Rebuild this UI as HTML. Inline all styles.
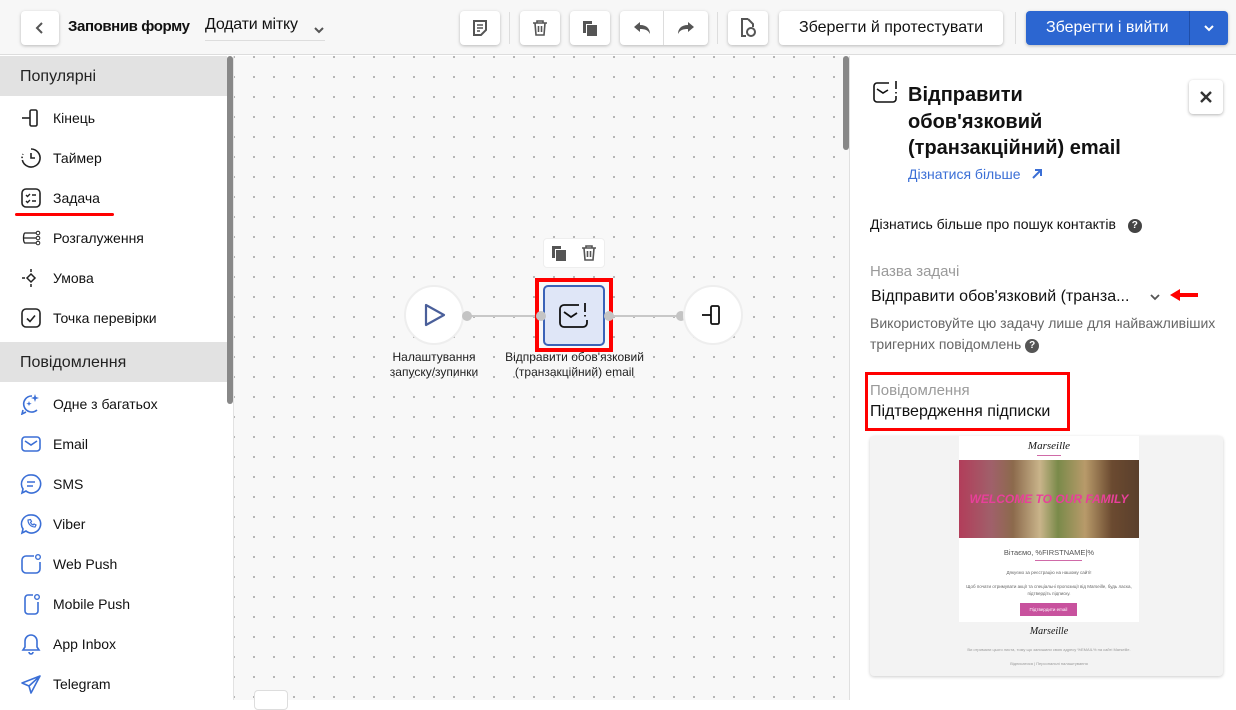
<!DOCTYPE html>
<html><head><meta charset="utf-8"><style>
*{box-sizing:border-box;margin:0;padding:0}
body{width:1236px;height:700px;overflow:hidden;font-family:"Liberation Sans","Noto Sans CJK SC",sans-serif;color:#111;background:#fff;position:relative;font-size:14px}
.abs{position:absolute}
.top{left:0;top:0;width:1236px;height:55px;background:#f7f7f7;border-bottom:1px solid #ddd}
.btn{position:absolute;top:11px;height:34px;background:#fff;border-radius:4px;box-shadow:0 1px 3px rgba(0,0,0,.25);display:flex;align-items:center;justify-content:center}
.sep{position:absolute;top:12px;width:1px;height:32px;background:#ddd}
.side{left:0;top:56px;width:234px;height:644px;background:#fff;border-right:1px solid #e2e2e2}
.hdr{position:absolute;left:0;width:227px;height:40px;background:#e2e2e2;font-size:16px;padding:12px 20px 0;color:#222}
.item{position:absolute;left:20px;height:24px;display:flex;align-items:center;font-size:14px;color:#111}
.item svg{width:22px;height:22px;margin-right:11px}
.canvas{left:234px;top:56px;width:615px;height:644px;background-color:#f8f8f8;background-image:radial-gradient(circle,#aaa 0.8px,transparent 1.2px);background-size:20px 20px;background-position:-10px -9px}
.panel{left:849px;top:56px;width:387px;height:644px;background:#fff;border-left:1px solid #e0e0e0}
.circ{position:absolute;width:60px;height:60px;border-radius:50%;background:#fff;border:2px solid #eee;display:flex;align-items:center;justify-content:center}
.dot{position:absolute;width:10px;height:10px;border-radius:50%;background:#c4c4c4}
.lbl{position:absolute;font-size:12px;text-align:center;color:#222;line-height:15px}
</style></head><body>
<div class="abs top">
 <div class="btn" style="left:21px;width:38px"><svg width="10" height="12"><path d="M7 1 2 6 7 11" stroke="#555" stroke-width="2" fill="none"/></svg></div>
 <div class="abs" style="left:68px;top:18px;font-weight:bold;font-size:15px;letter-spacing:-0.4px">Заповнив форму</div>
 <div class="abs" style="left:205px;top:16px;font-size:16px;border-bottom:1px solid #ddd;width:120px;height:25px;letter-spacing:-0.2px">Додати мітку</div>
 <div class="abs" style="left:313px;top:22px"><svg width="12" height="9"><path d="M2 2l4 4 4-4" stroke="#555" stroke-width="2" fill="none"/></svg></div>
 <div class="btn" style="left:460px;width:40px"><svg width="16" height="18"><path d="M2 2h12v9l-5 5H2z" stroke="#555" stroke-width="2" fill="none"/><path d="M5 6h6M5 9h6M5 12h3" stroke="#555" stroke-width="1.5"/></svg></div>
 <div class="sep" style="left:509px"></div>
 <div class="btn" style="left:520px;width:40px"><svg width="16" height="18"><path d="M1 4h14M5 4V2h6v2M3 4l1 12h8l1-12M6.5 7v6M9.5 7v6" stroke="#555" stroke-width="1.6" fill="none"/></svg></div>
 <div class="btn" style="left:570px;width:40px"><svg width="16" height="16"><path d="M1 1h9v3H4v9H1z" fill="#555"/><rect x="5" y="5" width="10" height="11" fill="#555"/></svg></div>
 <div class="btn" style="left:620px;width:88px;justify-content:space-around"><svg width="18" height="14"><path d="M7 1 1 6l6 5V8c5 0 8 1 10 5 0-5-3-9-10-9z" fill="#555"/></svg><span style="position:absolute;left:43px;top:0;width:1px;height:34px;background:#ddd"></span><svg width="18" height="14"><path d="M11 1l6 5-6 5V8C6 8 3 9 1 13c0-5 3-9 10-9z" fill="#555"/></svg></div>
 <div class="sep" style="left:717px"></div>
 <div class="btn" style="left:728px;width:40px"><svg width="18" height="20"><path d="M9 1H3v17h4M9 1l5 5v3" stroke="#555" stroke-width="2" fill="none"/><circle cx="12" cy="14" r="4" stroke="#555" stroke-width="2" fill="none"/></svg></div>
 <div class="btn" style="left:779px;width:224px;font-size:16px">Зберегти й протестувати</div>
 <div class="sep" style="left:1015px"></div>
 <div class="btn" style="left:1026px;width:202px;background:#2c66d1;color:#fff;font-size:16px;justify-content:flex-start"><span style="margin-left:20px">Зберегти і вийти</span><span style="position:absolute;left:163px;top:0;width:1px;height:34px;background:#1f4ea8"></span><svg style="position:absolute;left:177px;top:13px" width="12" height="9"><path d="M2 2l4 4 4-4" stroke="#fff" stroke-width="2" fill="none"/></svg></div>
</div>

<div class="abs side">
 <div class="hdr" style="top:0">Популярні</div>
 <div class="item" style="top:50px"><svg viewBox="0 0 22 22"><path d="M2 11h8" stroke="#222" stroke-width="1.6"/><rect x="10" y="3" width="7" height="16" rx="1.5" stroke="#222" stroke-width="1.6" fill="none"/></svg>Кінець</div>
 <div class="item" style="top:90px"><svg viewBox="0 0 22 22"><path d="M11 2a9 9 0 1 1-8 5" stroke="#222" stroke-width="1.6" fill="none" stroke-dasharray="40 2 1.5 2 1.5 2"/><path d="M11 6v5h4" stroke="#222" stroke-width="1.6" fill="none"/></svg>Таймер</div>
 <div class="item" style="top:130px"><svg viewBox="0 0 22 22"><rect x="2" y="2" width="18" height="18" rx="4" stroke="#222" stroke-width="1.6" fill="none"/><path d="M6 8l1.5 1.5L10 7M6 14l1.5 1.5L10 13M12 8h4M12 14h4" stroke="#222" stroke-width="1.4" fill="none"/></svg>Задача</div>
 <div class="abs" style="left:15px;top:157px;width:99px;height:3px;background:#f00;border-radius:2px"></div>
 <div class="item" style="top:170px"><svg viewBox="0 0 22 22"><path d="M3 11h13M5 6h11M5 16h11M5 6c-2 0-2 10 0 10" stroke="#222" stroke-width="1.3" fill="none"/><circle cx="18" cy="6" r="1.8" stroke="#222" fill="none"/><circle cx="18" cy="11" r="1.8" stroke="#222" fill="none"/><circle cx="18" cy="16" r="1.8" stroke="#222" fill="none"/></svg>Розгалуження</div>
 <div class="item" style="top:210px"><svg viewBox="0 0 22 22"><path d="M11 7l4 4-4 4-4-4z" stroke="#222" stroke-width="1.5" fill="none"/><path d="M2 11h3M11 2v3M11 17v3" stroke="#222" stroke-width="1.5"/></svg>Умова</div>
 <div class="item" style="top:250px"><svg viewBox="0 0 22 22"><rect x="2" y="2" width="18" height="18" rx="4" stroke="#222" stroke-width="1.6" fill="none"/><path d="M7 11.5l3 3 5-6" stroke="#222" stroke-width="1.6" fill="none"/></svg>Точка перевірки</div>
 <div class="hdr" style="top:286px">Повідомлення</div>
 <div class="item" style="top:336px"><svg viewBox="0 0 22 22"><path d="M12 3a8 8 0 1 0 5 14M3 17l-1 4 4-2" stroke="#3b6fd6" stroke-width="1.6" fill="none"/><path d="M15 1l1 3 3 1-3 1-1 3-1-3-3-1 3-1zM9 8l.7 2 2 .7-2 .7L9 13l-.7-1.6-2-.7 2-.7z" fill="#3b6fd6"/></svg>Одне з багатьох</div>
 <div class="item" style="top:376px"><svg viewBox="0 0 22 22"><rect x="2" y="4" width="18" height="14" rx="3" stroke="#3b6fd6" stroke-width="1.6" fill="none"/><path d="M5 8l6 4 6-4" stroke="#3b6fd6" stroke-width="1.6" fill="none"/></svg>Email</div>
 <div class="item" style="top:416px"><svg viewBox="0 0 22 22"><path d="M11 2a9 9 0 1 1-5 16l-4 2 1-4A9 9 0 0 1 11 2z" stroke="#3b6fd6" stroke-width="1.6" fill="none"/><path d="M7 9h8M7 13h6" stroke="#3b6fd6" stroke-width="1.6"/></svg>SMS</div>
 <div class="item" style="top:456px"><svg viewBox="0 0 22 22"><path d="M11 2a9 9 0 1 1-5 16l-4 2 1-4A9 9 0 0 1 11 2z" stroke="#3b6fd6" stroke-width="1.6" fill="none"/><path d="M8 7c0 4 3 7 7 7l1-2-2-1-1 1c-1-.5-2-1.5-2.5-2.5l1-1-1-2z" stroke="#3b6fd6" stroke-width="1.2" fill="none"/></svg>Viber</div>
 <div class="item" style="top:496px"><svg viewBox="0 0 22 22"><path d="M14 3H6a4 4 0 0 0-4 4v9a4 4 0 0 0 4 4h10a4 4 0 0 0 4-4V9" stroke="#3b6fd6" stroke-width="1.6" fill="none"/><circle cx="18" cy="4" r="2.3" stroke="#3b6fd6" stroke-width="1.4" fill="none"/></svg>Web Push</div>
 <div class="item" style="top:536px"><svg viewBox="0 0 22 22"><path d="M13 2H8a3 3 0 0 0-3 3v13a3 3 0 0 0 3 3h7a3 3 0 0 0 3-3V9" stroke="#3b6fd6" stroke-width="1.6" fill="none"/><circle cx="17" cy="4" r="2.3" stroke="#3b6fd6" stroke-width="1.4" fill="none"/></svg>Mobile Push</div>
 <div class="item" style="top:576px"><svg viewBox="0 0 22 22"><path d="M11 2a6 6 0 0 0-6 6v6l-2 3h16l-2-3V8a6 6 0 0 0-6-6zM9 19a2 2 0 0 0 4 0" stroke="#3b6fd6" stroke-width="1.6" fill="none"/></svg>App Inbox</div>
 <div class="item" style="top:616px"><svg viewBox="0 0 22 22"><path d="M20 3L2 10l7 3 2 7zM9 13l11-10" stroke="#3b6fd6" stroke-width="1.6" fill="none" stroke-linejoin="round"/></svg>Telegram</div>
 <div class="abs" style="left:227px;top:0;width:6px;height:348px;background:#888;border-radius:3px"></div>
</div>

<div class="abs canvas">
 <div class="abs" style="left:609px;top:0;width:6px;height:94px;background:#888;border-radius:3px"></div>
 <div class="abs" style="left:232px;top:259px;width:215px;height:2px;background:#c8c8c8"></div>
 <div class="circ" style="left:170px;top:229px"><svg width="26" height="26"><path d="M5 3l18 10-18 10z" stroke="#4a5f9a" stroke-width="2.2" fill="none" stroke-linejoin="round"/></svg></div>
 <div class="dot" style="left:228px;top:255px"></div>
 <div class="abs" style="left:309px;top:182px;width:62px;height:30px;background:#fff;border:1px solid #eee;border-radius:4px;display:flex;align-items:center;justify-content:space-around"><svg width="16" height="16"><path d="M1 1h9v3H4v9H1z" fill="#555"/><rect x="5" y="5" width="10" height="11" fill="#555"/></svg><svg width="16" height="18"><path d="M1 4h14M5 4V2h6v2M3 4l1 12h8l1-12M6.5 7v6M9.5 7v6" stroke="#555" stroke-width="1.6" fill="none"/></svg></div>
 <div class="abs" style="left:301px;top:222px;width:78px;height:74px;border:4px solid #f00"></div>
 <div class="abs" style="left:309px;top:229px;width:62px;height:61px;background:#dfe6f7;border:2px solid #3b63b8;border-radius:5px;display:flex;align-items:center;justify-content:center"><svg width="34" height="30"><path d="M22 4H7a4 4 0 0 0-4 4v14a4 4 0 0 0 4 4h19a4 4 0 0 0 4-4v-3" stroke="#111" stroke-width="1.8" fill="none"/><path d="M7 11l7 5 6-4M28 2v9M28 14v1.5" stroke="#111" stroke-width="1.8" fill="none"/></svg></div>
 <div class="dot" style="left:302px;top:255px"></div><div class="dot" style="left:370px;top:255px"></div><div class="dot" style="left:442px;top:255px"></div>
 <div class="circ" style="left:449px;top:229px"><svg width="26" height="26"><path d="M2 13h9" stroke="#111" stroke-width="1.8"/><rect x="11" y="4" width="8" height="18" rx="1.5" stroke="#111" stroke-width="1.8" fill="none"/></svg></div>
 <div class="lbl" style="left:145px;top:294px;width:110px">Налаштування запуску/зупинки</div>
 <div class="lbl" style="left:258px;top:294px;width:165px">Відправити обов'язковий (транзакційний) email</div>
 <div class="abs" style="left:20px;top:634px;width:34px;height:20px;background:#fff;border:1px solid #ddd;border-radius:4px"></div>
</div>

<div class="abs panel">
 <svg class="abs" style="left:22px;top:24px" width="28" height="26"><path d="M17 3H5a3 3 0 0 0-3 3v13a3 3 0 0 0 3 3h16a3 3 0 0 0 3-3v-3" stroke="#111" stroke-width="1.6" fill="none"/><path d="M5 9l6 4 5-3M24 1v8M24 12v1.5" stroke="#111" stroke-width="1.6" fill="none"/></svg>
 <div class="abs" style="left:58px;top:26px;font-size:20px;font-weight:bold;line-height:26.5px;width:240px">Відправити обов'язковий (транзакційний) email</div>
 <div class="abs" style="left:339px;top:24px;width:34px;height:34px;background:#fff;border-radius:4px;box-shadow:0 1px 3px rgba(0,0,0,.3);display:flex;align-items:center;justify-content:center"><svg width="12" height="12"><path d="M1 1l10 10M11 1 1 11" stroke="#333" stroke-width="2.4"/></svg></div>
 <div class="abs" style="left:58px;top:110px;font-size:14px;color:#3b6fd6">Дізнатися більше <svg style="margin-left:8px" width="11" height="11"><path d="M1 10l8-8M3 2h6v6" stroke="#3b6fd6" stroke-width="2" fill="none"/></svg></div>
 <div class="abs" style="left:20px;top:160px;font-size:14px">Дізнатись більше про пошук контактів <span style="display:inline-block;width:14px;height:14px;border-radius:50%;background:#444;color:#fff;font-size:10px;text-align:center;line-height:14px;font-weight:bold;margin-left:8px;vertical-align:1px">?</span></div>
 <div class="abs" style="left:20px;top:207px;font-size:15px;color:#9a9a9a">Назва задачі</div>
 <div class="abs" style="left:21px;top:232px;font-size:16px">Відправити обов'язковий (транза...</div>
 <svg class="abs" style="left:299px;top:237px" width="12" height="9"><path d="M2 2l4 4 4-4" stroke="#555" stroke-width="1.8" fill="none"/></svg>
 <svg class="abs" style="left:320px;top:232px" width="30" height="14"><path d="M0 7l10-6v4h18v4H10v4z" fill="#f00"/></svg>
 <div class="abs" style="left:20px;top:257px;font-size:14px;color:#666;line-height:21px;width:360px">Використовуйте цю задачу лише для найважливіших тригерних повідомлень <span style="display:inline-block;width:14px;height:14px;border-radius:50%;background:#555;color:#fff;font-size:10px;text-align:center;line-height:14px;font-weight:bold;vertical-align:1px">?</span></div>
 <div class="abs" style="left:15px;top:316px;width:205px;height:59px;border:3px solid #f00"></div>
 <div class="abs" style="left:20px;top:326px;font-size:15px;color:#9a9a9a">Повідомлення</div>
 <div class="abs" style="left:20px;top:347px;font-size:16px">Підтвердження підписки</div>
 <div class="abs" style="left:20px;top:380px;width:353px;height:240px;background:#f3f3f3;border-radius:4px;box-shadow:0 1px 3px rgba(0,0,0,.2);overflow:hidden">
  <div class="abs" style="left:89px;top:0;width:180px;height:186px;background:#fff"></div>
  <div class="abs" style="left:89px;top:4px;width:180px;text-align:center;font-family:'Liberation Serif',serif;font-style:italic;font-size:11px">Marseille</div>
  <div class="abs" style="left:167px;top:19px;width:24px;height:1px;background:#d06aa8"></div>
  <div class="abs" style="left:89px;top:24px;width:180px;height:78px;background:linear-gradient(90deg,#b23d5a 0%,#a0606a 18%,#8c6a4c 30%,#c9b48a 45%,#7a8a4a 55%,#b89a6a 70%,#6b4a30 85%,#5a3f2c 100%)"></div>
  <div class="abs" style="left:89px;top:56px;width:180px;text-align:center;color:#e8409a;font-weight:bold;font-style:italic;font-size:12px">WELCOME TO OUR FAMILY</div>
  <div class="abs" style="left:89px;top:112px;width:180px;text-align:center;font-size:7.5px;color:#555">Вітаємо, %FIRSTNAME|%</div>
  <div class="abs" style="left:165px;top:124px;width:47px;height:1px;background:#d06aa8"></div>
  <div class="abs" style="left:95px;top:133px;width:168px;text-align:center;font-size:4.5px;color:#666;line-height:7px">Дякуємо за реєстрацію на нашому сайті!<br><br>Щоб почати отримувати акції та спеціальні пропозиції від Marseille, будь ласка, підтвердіть підписку.</div>
  <div class="abs" style="left:150px;top:167px;width:57px;height:13px;background:#c8529e;color:#fff;font-size:4.5px;text-align:center;line-height:13px">Підтвердити email</div>
  <div class="abs" style="left:89px;top:190px;width:180px;text-align:center;font-family:'Liberation Serif',serif;font-style:italic;font-size:10px">Marseille</div>
  <div class="abs" style="left:95px;top:210px;width:168px;text-align:center;font-size:4px;color:#999;line-height:7px">Ви отримали цього листа, тому що залишили свою адресу %EMAIL% на сайті Marseille.<br><br>Відписатися | Персональні налаштування</div>
 </div>
</div>
</body></html>
